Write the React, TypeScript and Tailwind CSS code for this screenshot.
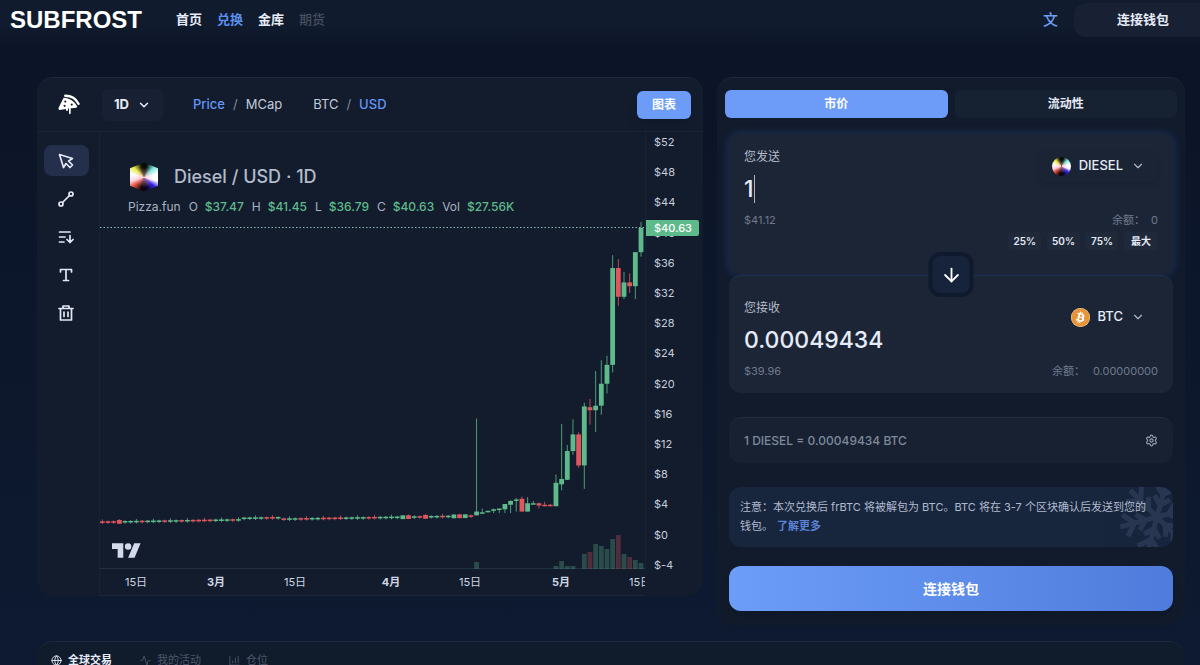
import { useState } from 'react'
import type { ReactNode } from 'react'
import { Activity, ArrowDown, ChevronDown, Globe, Settings } from 'lucide-react'
import { FaBitcoin } from 'react-icons/fa'

interface Candle {
  open: number
  high: number
  low: number
  close: number
  volume: number
}

const PLOT_W = 545
const PLOT_H = 437
const ZERO_Y = 403
const PX_PER_USD = 7.5625
const STEP = 5.67

const priceTicks = [52, 48, 44, 40, 36, 32, 28, 24, 20, 16, 12, 8, 4, 0, -4]

const timeTicks = [
  { x: 36, label: '15日', bold: false },
  { x: 116, label: '3月', bold: true },
  { x: 195, label: '15日', bold: false },
  { x: 291, label: '4月', bold: true },
  { x: 370, label: '15日', bold: false },
  { x: 461, label: '5月', bold: true },
  { x: 540, label: '15日', bold: false },
]

// g = up day, r = down day
const quietDays = 'rrrrgggrgggrggrgrrrrgggrgggggrrgrggrrggrrrrggggrrgggggrgrrggrggrgr'
const busyQuietDays = [3, 53, 54, 57, 62, 63, 64]

// open, high, low, close, volume
const recentDays = [
  [2.6, 15.4, 2.6, 3.1, 7],
  [2.9, 3.5, 2.9, 3.0, 1],
  [3.0, 3.2, 3.0, 3.2, 1],
  [3.2, 3.5, 2.9, 3.4, 1],
  [3.3, 3.5, 2.9, 3.5, 1],
  [3.4, 4.1, 2.9, 4.1, 1],
  [4.0, 4.6, 2.9, 4.5, 1],
  [4.6, 4.9, 3.1, 4.7, 1],
  [4.8, 5.1, 3.1, 3.1, 1],
  [3.1, 5.0, 3.1, 4.2, 1],
  [4.1, 4.5, 4.1, 4.2, 1],
  [4.2, 4.3, 3.5, 3.9, 1],
  [4.0, 4.4, 3.8, 3.9, 1],
  [4.0, 4.1, 3.8, 3.8, 1],
  [3.8, 8.0, 3.8, 6.9, 3],
  [6.7, 14.7, 5.9, 7.4, 8],
  [7.3, 11.9, 7.3, 11.1, 3],
  [11.1, 15.3, 10.6, 13.3, 3],
  [13.3, 13.6, 8.9, 9.2, 1],
  [9.2, 17.5, 6.1, 17.0, 15],
  [16.9, 18.0, 14.6, 16.5, 17],
  [16.5, 21.7, 13.6, 17.1, 25],
  [17.1, 23.1, 15.9, 20.0, 23],
  [20.0, 23.7, 18.7, 22.5, 20],
  [22.5, 37.0, 21.5, 35.3, 30],
  [35.3, 36.5, 30.3, 31.5, 34],
  [31.5, 34.8, 31.2, 33.4, 15],
  [33.4, 34.6, 32.0, 32.9, 12],
  [32.9, 37.4, 31.2, 37.4, 9],
  [37.4, 41.4, 36.8, 40.6, 6],
]

const candles: Candle[] = [
  ...quietDays.split('').map((c, i) => {
    const mid = 1.7 + (i / 65) * 0.8 + (i > 24 && i < 32 ? 0.2 : 0)
    const body = busyQuietDays.includes(i) ? 0.25 : 0.1
    const wick = i % 3 === 0 ? 0.35 : 0.2
    return {
      open: c === 'g' ? mid - body : mid + body,
      close: c === 'g' ? mid + body : mid - body,
      high: mid + wick,
      low: mid - 0.25,
      volume: 1,
    }
  }),
  ...recentDays.map(([open, high, low, close, volume]) => ({ open, high, low, close, volume })),
]

const toY = (price: number) => ZERO_Y - price * PX_PER_USD

function PriceChart() {
  return (
    <svg
      viewBox={`0 0 ${PLOT_W} ${PLOT_H}`}
      preserveAspectRatio="none"
      className="block w-full h-[437px]"
      role="img"
      aria-label="Diesel / USD"
    >
      <line x1="0" x2="545" y1="436.5" y2="436.5" stroke="#223042" />
      {candles.map((c, i) => {
        const x = 541 - STEP * (candles.length - 1 - i)
        const up = c.close >= c.open
        const color = up ? '#5fba8b' : '#e0565f'
        const top = toY(Math.max(c.open, c.close))
        const height = Math.max(1.5, Math.abs(c.close - c.open) * PX_PER_USD)
        return (
          <g key={i}>
            {c.volume > 1 && (
              <rect x={x - 2.4} y={437 - c.volume} width="4.8" height={c.volume} fill={color} opacity="0.3" />
            )}
            <rect x={x - 0.5} y={toY(c.high)} width="1" height={(c.high - c.low) * PX_PER_USD} fill={color} opacity="0.8" />
            <rect x={x - 2.4} y={top} width="4.8" height={height} fill={color} />
          </g>
        )
      })}
      <line x1="0" x2="545" y1="95.5" y2="95.5" stroke="#8fb9ac" strokeDasharray="1.5 2" />
    </svg>
  )
}

function PizzaLogo() {
  return (
    <svg viewBox="0 0 64 62" className="h-[21px] w-[22px]" fill="none" aria-hidden="true">
      <path d="M21 5C38 5 53 14 60 29" stroke="#fff" strokeWidth="7" strokeLinecap="round" />
      <path
        fillRule="evenodd"
        fill="#fff"
        d="M16 11C34 12 48 21 56 36Q57 41 49 41L37 42V57Q34.500 62 32 57V43L29 43V48Q26 52 23 48V44L4 47Q0 46 1 41ZM21 19a3 3 0 1 0 .1 0ZM40 28a3 3 0 1 0 .1 0ZM19 32a3 3 0 1 0 .1 0Z"
      />
    </svg>
  )
}

function ToolIcon({ children }: { children: ReactNode }) {
  return (
    <svg viewBox="0 0 16 16" className="size-4" fill="none" stroke="#e3e8f4" strokeWidth="1.7" strokeLinecap="round" strokeLinejoin="round" aria-hidden="true">
      {children}
    </svg>
  )
}

const tools = [
  {
    name: '光标',
    icon: <path d="M1.500 1.500 14.500 5.500 10.500 8 14.500 12 12 14.500 8 10.500 5.500 14.500Z" />,
  },
  {
    name: '趋势线',
    icon: (
      <>
        <circle cx="3" cy="13" r="2" />
        <circle cx="13" cy="3" r="2" />
        <path d="M4.500 11.500 11.500 4.500" />
      </>
    ),
  },
  {
    name: '排序',
    icon: <path d="M1.500 3H12M1.500 8H7M1.500 13H6M12 6.500V13.500M9 10.500 12 13.500 15 10.500" />,
  },
  {
    name: '文字',
    icon: <path d="M2.500 5V2.500H13.500V5M8 2.500V13.500M5.500 13.500H10.500" />,
  },
  {
    name: '删除',
    icon: <path d="M1 3.500H15M5 3.500V1H11V3.500M2.500 3.500V15H13.500V3.500M6 7V11.500M10 7V11.500" />,
  },
]

function DieselIcon({ className }: { className: string }) {
  return (
    <span
      className={`block shrink-0 bg-[radial-gradient(circle,#ffb0c0a0_0%,transparent_50%),conic-gradient(#050505_0deg,#0b1a14_15deg,#7fe9dd_45deg,#ffffff_75deg,#ffffff_105deg,#3a22e8_130deg,#0b0620_165deg,#120308_195deg,#e0503c_230deg,#ffd9e4_255deg,#ffffff_285deg,#e9ea4a_315deg,#1d1c05_345deg,#050505_360deg)] ${className}`}
    />
  )
}

function Snowflake() {
  return (
    <svg viewBox="0 0 80 80" className="absolute -right-6 -top-2.5 size-20" fill="none" stroke="#4a5878" strokeWidth="5" opacity="0.35" aria-hidden="true">
      {[15, 75, 135, 195, 255, 315].map((deg) => (
        <path key={deg} transform={`rotate(${deg} 40 40)`} d="M40 40V2M29 7 40 17 51 7M32 20 40 28 48 20" />
      ))}
    </svg>
  )
}

function Stat({ label, value }: { label: string; value: string }) {
  return (
    <span className="flex gap-[7px]">
      <span>{label}</span>
      <span className="font-medium text-[#5fba8b]">{value}</span>
    </span>
  )
}

export default function App() {
  const [amount, setAmount] = useState('1')

  return (
    <div className="h-screen overflow-hidden bg-linear-to-b from-[#0c1426] to-[#0d1a31] text-[#e6ebf7] font-['Inter','Noto_Sans_CJK_SC',sans-serif]">
      <header className="flex h-12 items-start justify-between bg-linear-to-b from-[#101c2e] via-[#101b2d] to-[#0c1528]">
        <div className="flex h-10 items-center gap-[34px] pl-2.5">
          <span className="text-2xl font-bold text-white font-['Liberation_Sans',sans-serif]">SUBFROST</span>
          <nav className="flex gap-[15px] text-[13px] font-bold">
            <a href="#home">首页</a>
            <a href="#swap" className="text-[#5c8fee]">兑换</a>
            <a href="#vaults">金库</a>
            <a href="#futures" className="font-medium text-[#474f60]">期货</a>
          </nav>
        </div>
        <div className="flex items-center gap-4 pt-[3px]">
          <button className="text-[15px] font-medium text-[#6f9df3]">文</button>
          <button className="h-[34px] rounded-l-xl bg-[#182133] pl-[43px] pr-[31px] text-[13px] font-bold">连接钱包</button>
        </div>
      </header>

      <main className="grid grid-cols-[minmax(0,666fr)_minmax(0,468fr)] items-start gap-[14px] pl-[37px] pr-[15px] pt-[29px]">
        {/* 图表 */}
        <section className="overflow-hidden rounded-2xl border-t border-[#1d2a3b] bg-[#121c2d]">
          <div className="flex h-[54px] items-center border-b border-[#182537] pr-3 text-[13px]">
            <div className="flex w-[63px] justify-center">
              <PizzaLogo />
            </div>
            <button className="ml-[2px] flex h-8 w-[61px] items-center justify-center gap-2 rounded-md bg-[#172133] font-bold">
              1D
              <ChevronDown size={14} strokeWidth={2.5} />
            </button>
            <div className="ml-[30px] flex gap-2 text-[#c3cad9]">
              <button className="font-medium text-[#6496f5]">Price</button>
              <span className="text-[#7e889b]">/</span>
              <button>MCap</button>
            </div>
            <div className="ml-[31px] flex gap-2 text-[#c3cad9]">
              <button>BTC</button>
              <span className="text-[#7e889b]">/</span>
              <button className="font-medium text-[#6496f5]">USD</button>
            </div>
            <button className="ml-auto h-7 rounded-md bg-[#6c9cf7] px-[15px] text-xs font-bold text-white shadow-lg">图表</button>
          </div>

          <div className="flex">
            <div className="flex w-[63px] shrink-0 flex-col items-center gap-[7px] border-r border-[#182436] pr-1 pt-[13px]">
              {tools.map((t, i) => (
                <button
                  key={t.name}
                  aria-label={t.name}
                  className={`flex w-[45px] h-[31px] items-center justify-center rounded-lg ${i === 0 ? 'bg-[#232f4b]' : ''}`}
                >
                  <ToolIcon>{t.icon}</ToolIcon>
                </button>
              ))}
            </div>

            <div className="min-w-0 grow">
              <div className="flex">
                <div className="relative min-w-0 grow">
                  <PriceChart />
                  <div className="absolute left-7 top-[31px]">
                    <div className="flex h-7 items-center gap-4">
                      <DieselIcon className="ml-0.5 h-[29px] w-[28px] [clip-path:polygon(50%_0,100%_20%,100%_80%,50%_100%,0_80%,0_20%)]" />
                      <h1 className="text-lg font-medium text-[#b3bbca]">Diesel / USD · 1D</h1>
                    </div>
                    <div className="mt-2 flex gap-2 text-xs leading-4 text-[#a9b2c2]">
                      <span>Pizza.fun</span>
                      <Stat label="O" value="$37.47" />
                      <Stat label="H" value="$41.45" />
                      <Stat label="L" value="$36.79" />
                      <Stat label="C" value="$40.63" />
                      <Stat label="Vol" value="$27.56K" />
                    </div>
                  </div>
                  <svg viewBox="0 4 36 18" className="absolute bottom-[11px] left-3 h-[15px] w-[29px]" fill="#d5daea" aria-hidden="true">
                    <path d="M14 22H7V11H0V4h14v18zM28 22h-8l7.500-18h8L28 22z" />
                    <circle cx="20" cy="8" r="4" />
                  </svg>
                </div>
                <div className="relative -mb-[3px] flex h-[440px] w-[58px] shrink-0 flex-col justify-between border-l border-[#172335] pl-2 pt-[3px] text-[11px] leading-[14px] text-[#c6cddc]">
                  {priceTicks.map((p) => (
                    <span key={p}>${p}</span>
                  ))}
                  <span className="absolute left-0 top-[88px] h-4 w-[53px] rounded-r-xs bg-[#5fba8b] pl-2 text-[11px] leading-4 font-medium text-white">$40.63</span>
                </div>
              </div>
              <div className="relative h-[27px] w-[calc(100%-58px)] overflow-hidden border-b border-[#1b2839] text-[11px] leading-[27px] text-[#d0d6e3]">
                {timeTicks.map((t) => (
                  <span
                    key={t.x}
                    className={`absolute -translate-x-1/2 whitespace-nowrap ${t.bold ? 'font-bold' : ''}`}
                    style={{ left: `${(t.x / PLOT_W) * 100}%` }}
                  >
                    {t.label}
                  </span>
                ))}
              </div>
            </div>
          </div>
        </section>

        {/* 兑换 */}
        <section className="rounded-2xl border-t border-[#1d2a3b] bg-[#111b2c] px-2 pb-[14px] pt-3">
          <div className="grid grid-cols-2 gap-[7px] text-xs font-bold">
            <button className="h-7 rounded-md bg-[#6c9cf7] text-white">市价</button>
            <button className="h-7 rounded-md bg-[#162132]">流动性</button>
          </div>

          <div className="mx-1 mt-4">
            <div className="h-[140px] rounded-xl bg-[#1c2536] px-[15px] pt-[13px] shadow-[0_0_6px_3px_#1a2946]">
              <div className="flex justify-between">
                <div>
                  <label htmlFor="send" className="block text-xs leading-5 text-[#b4bccb]">您发送</label>
                  <div className="mt-1.5 flex h-8 items-center">
                    <input
                      id="send"
                      value={amount}
                      onChange={(e) => setAmount(e.target.value)}
                      className="field-sizing-content min-w-2 max-w-44 bg-transparent text-[23px] leading-8 font-medium caret-transparent outline-none"
                    />
                    <span className="h-7 w-px bg-[#aab4c8]" />
                  </div>
                </div>
                <button className="mt-[3px] flex h-8 items-center gap-2 rounded-lg bg-[#1a2435] px-[13px] text-[13px] font-medium shadow-md">
                  <DieselIcon className="size-[19px] rounded-full" />
                  DIESEL
                  <ChevronDown size={14} className="text-[#aeb8cb]" />
                </button>
              </div>
              <div className="mt-1.5 flex justify-between text-[11px] leading-[18px] text-[#6f7a8d]">
                <span>$41.12</span>
                <span className="flex gap-1.5"><span>余额：</span>0</span>
              </div>
              <div className="mt-[3px] flex justify-end gap-1.5 text-[10px] font-semibold leading-[18px]">
                {['25%', '50%', '75%', '最大'].map((p) => (
                  <button key={p} className="rounded bg-[#1f2939] px-[5px] last:px-[7px]">{p}</button>
                ))}
              </div>
            </div>

            <div className="relative mt-[2px] h-[117px] rounded-xl bg-[#1b2536] px-[15px] pt-[22px] shadow-[0_-1px_0_#1e3150]">
              <button aria-label="切换" className="absolute -top-6 left-1/2 flex size-[45px] -translate-x-1/2 items-center justify-center rounded-xl border-4 border-[#101a2f] bg-[#17233a]">
                <ArrowDown size={22} className="text-white" />
              </button>
              <div className="flex justify-between">
                <div>
                  <div className="text-xs leading-5 text-[#b4bccb]">您接收</div>
                  <div className="mt-1.5 text-[23px] font-medium leading-8">0.00049434</div>
                </div>
                <button className="mt-[3px] flex h-8 items-center gap-2 px-[13px] text-[13px] font-medium">
                  <span className="rounded-full bg-white">
                    <FaBitcoin size={19} className="text-[#e8943a]" />
                  </span>
                  BTC
                  <ChevronDown size={14} className="text-[#aeb8cb]" />
                </button>
              </div>
              <div className="mt-1.5 flex justify-between text-[11px] leading-[18px] text-[#6f7a8d]">
                <span>$39.96</span>
                <span className="flex gap-2"><span>余额：</span>0.00000000</span>
              </div>
            </div>

            <div className="mt-6 flex h-[46px] items-center justify-between rounded-xl border-t border-[#202d40] bg-[#172132] px-[15px] text-xs font-medium text-[#7e899c]">
              1 DIESEL = 0.00049434 BTC
              <button aria-label="设置">
                <Settings size={13} className="text-[#98a3b8]" />
              </button>
            </div>

            <div className="relative mt-6 overflow-hidden rounded-xl bg-[#17253d] py-[11px] pl-[11px] pr-5 text-[11px] leading-[19px] text-[#b1bace]">
              <Snowflake />
              <p className="relative">
                注意：本次兑换后 frBTC 将被解包为 BTC。BTC 将在 3-7 个区块确认后发送到您的钱包。
                <a href="#more" className="ml-1 inline-block font-bold text-[#5c82d6]">了解更多</a>
              </p>
            </div>

            <button className="mt-[19px] h-[45px] w-full rounded-xl bg-linear-to-r from-[#6c9df8] to-[#4f7cdc] text-sm font-bold text-white shadow-lg">连接钱包</button>
          </div>
        </section>
      </main>

      <section className="ml-[37px] mr-[15px] mt-4 flex h-16 gap-7 rounded-t-2xl border-t border-[#1d2a3b] bg-[#101b2c] pl-[14px] pt-[9px] text-[11px] leading-[18px] text-[#4d576a]">
        <button className="flex h-[18px] items-center gap-1.5 font-bold text-[#e6ebf7]">
          <Globe size={11} />
          全球交易
        </button>
        <button className="flex h-[18px] items-center gap-1.5">
          <Activity size={11} />
          我的活动
        </button>
        <button className="flex h-[18px] items-center gap-1.5">
          <svg viewBox="0 0 12 12" className="size-[11px]" fill="none" stroke="currentColor" aria-hidden="true">
            <path d="M1 1V11H11.500M4 9V6M7 9V3M10 9V1" />
          </svg>
          仓位
        </button>
      </section>
    </div>
  )
}
